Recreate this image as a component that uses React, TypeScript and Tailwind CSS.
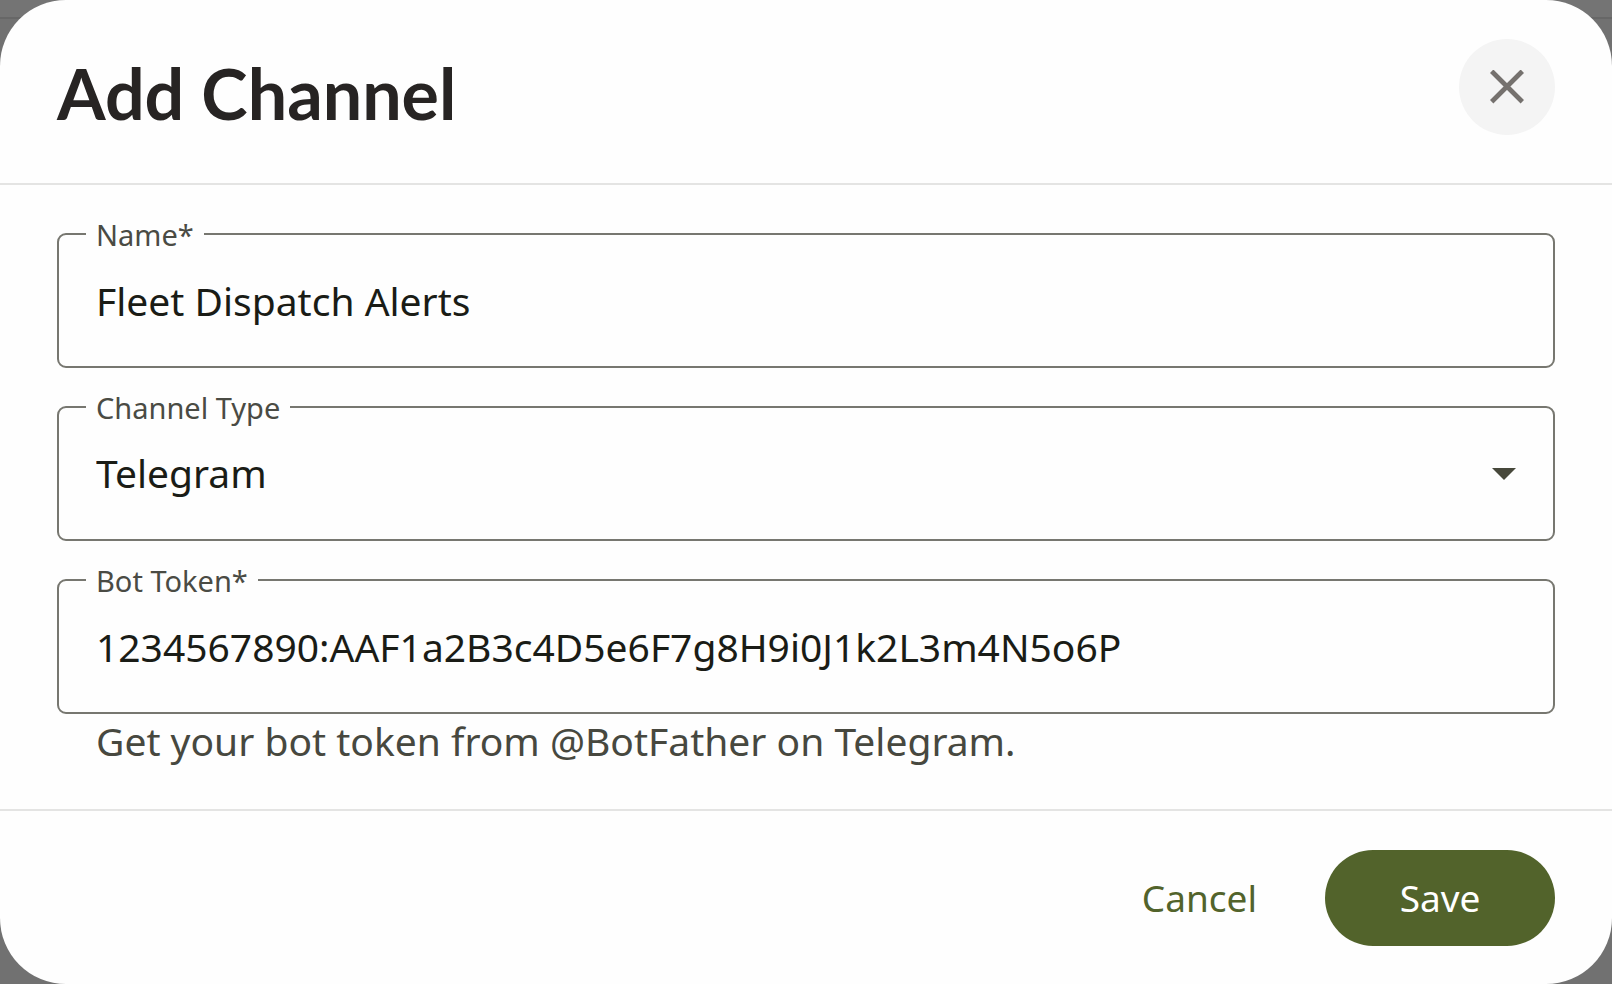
import React, { useState } from 'react';

interface FieldProps {
  id: string;
  label: string;
  children: React.ReactNode;
}

const controlClass =
  'block h-[135px] w-full appearance-none rounded-[9px] border-2 border-[#777770] bg-transparent px-[37px] text-[39px] text-[#1a1c16] outline-none focus:border-[#52632b]';

function Field({ id, label, children }: FieldProps) {
  return (
    <div className="relative">
      {children}
      <label
        htmlFor={id}
        className="absolute -top-3.5 left-[29px] bg-[#fefefe] px-[10px] text-[29px] leading-8 text-[#4a4b44]"
      >
        {label}
      </label>
    </div>
  );
}

export default function App() {
  const [name, setName] = useState('Fleet Dispatch Alerts');
  const [type, setType] = useState('Telegram');
  const [token, setToken] = useState('1234567890:AAF1a2B3c4D5e6F7g8H9i0J1k2L3m4N5o6P');

  return (
    <div className="relative min-h-screen bg-[#717171] font-['Noto_Sans',sans-serif]">
      {/* edge of the dimmed page behind the dialog */}
      <div className="absolute inset-x-0 top-0 h-[19px] border-b-2 border-[#676767] bg-[#747474]" />

      <form
        role="dialog"
        aria-labelledby="dialog-title"
        className="relative min-h-screen rounded-[66px] bg-[#fefefe]"
        onSubmit={(e) => e.preventDefault()}
      >
        <header className="flex items-start justify-between border-b-2 border-[#e4e4e3] px-[57px] pt-[39px] pb-[42px]">
          <h2 id="dialog-title" className="mt-1.5 font-['Lato',sans-serif] text-[70px] leading-[96px] font-bold text-[#272423]">
            Add Channel
          </h2>
          <button
            type="button"
            aria-label="Close"
            className="flex size-24 items-center justify-center rounded-full bg-[#f4f4f4] text-[#75716e]"
          >
            <svg viewBox="0 0 34 34" className="size-[34px]" fill="none" stroke="currentColor" strokeWidth="4.8">
              <path d="M1.7 1.2 32.3 31.8M32.3 1.2 1.7 31.8" />
            </svg>
          </button>
        </header>

        <div className="px-[57px] pt-12 pb-[45px]">
          <div className="flex flex-col gap-[38px]">
            <Field id="name" label="Name*">
              <input id="name" required value={name} onChange={(e) => setName(e.target.value)} className={controlClass} />
            </Field>

            <Field id="type" label="Channel Type">
              <select id="type" value={type} onChange={(e) => setType(e.target.value)} className={controlClass}>
                <option>Telegram</option>
              </select>
              <svg
                viewBox="0 0 24 12"
                className="pointer-events-none absolute inset-y-0 right-[39px] my-auto h-3 w-6"
                fill="#47483b"
              >
                <path d="M0 0h24L12 12z" />
              </svg>
            </Field>

            <Field id="token" label="Bot Token*">
              <input
                id="token"
                required
                aria-describedby="token-help"
                value={token}
                onChange={(e) => setToken(e.target.value)}
                className={controlClass}
              />
            </Field>
          </div>
          <p id="token-help" className="px-[39px] pt-1 text-[39px] leading-[46px] text-[#47483f]">
            Get your bot token from @BotFather on Telegram.
          </p>
        </div>

        <footer className="flex justify-end gap-5 border-t-2 border-[#e4e4e3] px-[57px] pt-[39px] pb-[38px] text-[37px]">
          <button type="button" className="h-24 rounded-full px-12 text-[#52632b]">
            Cancel
          </button>
          <button type="submit" className="h-24 w-[230px] rounded-full bg-[#52632b] text-white">
            Save
          </button>
        </footer>
      </form>
    </div>
  );
}
